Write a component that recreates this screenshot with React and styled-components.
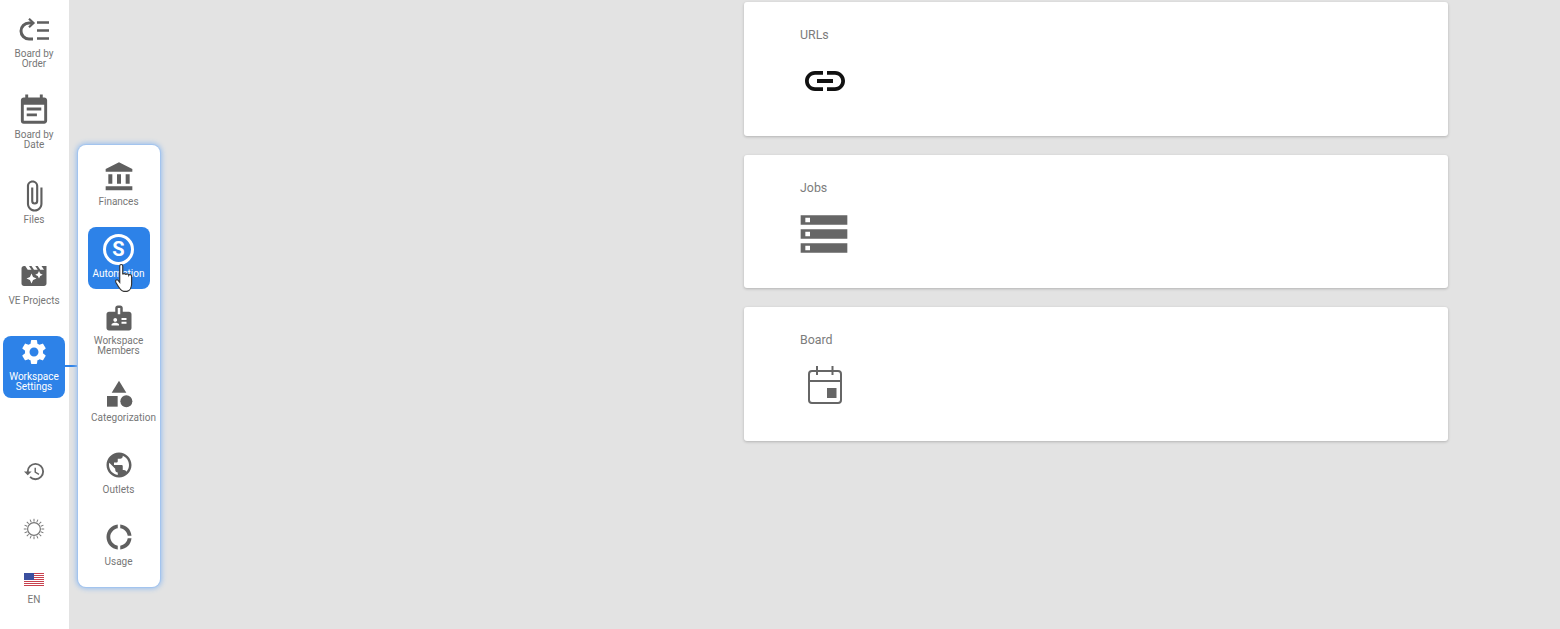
import React from 'react'
import styled, { createGlobalStyle } from 'styled-components'
import {
  MdAccountBalance,
  MdAttachFile,
  MdBadge,
  MdCategory,
  MdDonutLarge,
  MdEventNote,
  MdHistory,
  MdLink,
  MdMovieFilter,
  MdPublic,
  MdSettings,
  MdStorage,
} from 'react-icons/md'

const GlobalStyle = createGlobalStyle`
  html, body { margin: 0; height: 100%; background: #e3e3e3; }
  body { font-family: Roboto, "Liberation Sans", sans-serif; overflow: hidden; }
  #root { height: 100%; }
`

const Page = styled.div`
  display: flex;
  height: 629px;
  background: #e3e3e3;
  position: relative;
`

const Sidebar = styled.nav`
  width: 69px;
  flex: none;
  background: #fff;
  display: flex;
  flex-direction: column;
  padding: 12px 4px 0 3px;
  box-sizing: border-box;
`

const NavList = styled.div`
  display: flex;
  flex-direction: column;
  gap: 19px;
`

const NavItem = styled.div`
  width: 62px;
  height: 62px;
  box-sizing: border-box;
  padding-bottom: ${(p) => p.$pb || 0}px;
  border-radius: 8px;
  display: flex;
  flex-direction: column;
  align-items: center;
  justify-content: center;
  color: ${(p) => (p.$active ? '#fff' : '#5f5f5f')};
  background: ${(p) => (p.$active ? '#2d82e8' : 'transparent')};
  position: relative;
`

const FlyoutItem = styled(NavItem)`
  padding-right: 1px;
`

const Label = styled.span`
  display: block;
  width: 100%;
  padding: 0 3px;
  box-sizing: border-box;
  margin-top: ${(p) => p.$gap || 0}px;
  font-size: 10px;
  line-height: 10px;
  text-align: center;
  white-space: pre-line;
  color: ${(p) => (p.$active ? '#fff' : '#777')};
`

const Connector = styled.span`
  position: absolute;
  left: 62px;
  top: 29px;
  width: 13px;
  height: 2px;
  background: #2d82e8;
`

const BottomList = styled.div`
  display: flex;
  flex-direction: column;
  align-items: center;
  margin-top: 62px;
  color: #666;
`

const LangBlock = styled.div`
  display: flex;
  flex-direction: column;
  align-items: center;
  margin-top: 33px;
`

const SunWrap = styled.div`
  margin-top: 35px;
  height: 22px;
`

const Flyout = styled.div`
  position: absolute;
  left: 78px;
  top: 145px;
  width: 82px;
  height: 442px;
  box-sizing: border-box;
  background: #fff;
  border-radius: 8px;
  box-shadow: 0 0 0 1px #a3c4ee, 0 0 5px 2px #9cc0ee;
  padding: 10px 0 0 10px;
  display: flex;
  flex-direction: column;
  gap: 10px;
`

const Cursor = styled.svg`
  position: absolute;
  left: 24px;
  top: 36px;
`

const Main = styled.main`
  flex: 1;
  padding: 2px 0 0 675px;
`

const Cards = styled.div`
  width: 704px;
  display: flex;
  flex-direction: column;
  gap: 19px;
`

const Card = styled.section`
  height: 133.5px;
  box-sizing: border-box;
  background: #fff;
  border-radius: 3px;
  box-shadow: 0 1px 3px rgba(0, 0, 0, 0.22);
  padding: 26px 56px 0;
`

const CardTitle = styled.div`
  font-size: 12.4px;
  line-height: 14px;
  color: #7c7c7c;
`

const CardIcon = styled.div`
  margin-top: ${(p) => p.$top}px;
  margin-left: ${(p) => p.$left || 0}px;
  color: ${(p) => p.$color || '#666'};
  display: flex;
`

const SCircle = styled.div`
  width: 31px;
  height: 31px;
  box-sizing: border-box;
  border: 3.5px solid #fff;
  border-radius: 50%;
  display: flex;
  align-items: center;
  justify-content: center;
  font-size: 20px;
  font-weight: 700;
  color: #fff;
`

const OrderIcon = () => (
  <svg width="30" height="24" viewBox="0 0 30 24" fill="none" stroke="currentColor" strokeWidth="3">
    <path d="M13 5H10A8 8 0 0 0 10 21H14" />
    <path d="M10 0.8L14.5 5L10 9.2" strokeWidth="2.2" />
    <path d="M18 4.5H30M18 12.5H30M18 20.5H30" strokeWidth="2.4" />
  </svg>
)

const SunIcon = () => (
  <svg width="22" height="22" viewBox="0 0 22 22" fill="none" stroke="#777" strokeWidth="1">
    <circle cx="11" cy="11" r="6.4" strokeWidth="1.2" />
    {Array.from({ length: 16 }).map((_, i) => (
      <line key={i} x1="11" y1="0.8" x2="11" y2="3.6" transform={`rotate(${i * 22.5} 11 11)`} />
    ))}
  </svg>
)

const FlagIcon = () => (
  <svg width="20" height="13" viewBox="0 0 20 13">
    <rect width="20" height="13" fill="#fff" />
    {[0, 2, 4, 6, 8, 10, 12].map((y) => (
      <rect key={y} y={y} width="20" height="1" fill="#c8414e" />
    ))}
    <rect width="10" height="7" fill="#3b4f9f" />
  </svg>
)

const CalendarIcon = () => (
  <svg width="34" height="38" viewBox="0 0 34 38" fill="none" stroke="#666" strokeWidth="2">
    <rect x="1" y="5" width="32" height="32" rx="3" />
    <path d="M1 15H33" />
    <path d="M9 0V9M24.5 0V9" />
    <rect x="19" y="22" width="9.5" height="10" fill="#666" stroke="none" />
  </svg>
)

const HandCursor = () => (
  <Cursor width="27" height="30" viewBox="0 0 22 26">
    <path
      d="M6 2.5c0-1.6 2.6-1.6 2.6 0V10c0-1 2.4-1.2 2.6.2 .2-1 2.4-1 2.6.4 .4-.9 2.4-.7 2.5.8V18c0 3-1.6 6-4 6.6H9.5C7 24.4 5 21 2.6 16.6c-.8-1.6 1-2.8 2.1-1.5L6 16.8Z"
      fill="#fff"
      stroke="#333"
      strokeWidth="1"
    />
  </Cursor>
)

const flyoutItems = [
  { label: 'Finances', icon: <MdAccountBalance size={32} />, gap: 4, pb: 4 },
  { label: 'Automation', active: true, gap: 4.5, pb: 3 },
  { label: 'Workspace\nMembers', icon: <MdBadge size={30} />, gap: 3, pb: 1 },
  { label: 'Categorization', icon: <MdCategory size={32} />, gap: 3, pb: 3 },
  { label: 'Outlets', icon: <MdPublic size={30} />, gap: 5, pb: 3 },
  { label: 'Usage', icon: <MdDonutLarge size={30} />, gap: 5, pb: 3 },
]

export default function App() {
  return (
    <Page>
      <GlobalStyle />
      <Sidebar>
        <NavList>
          <NavItem>
            <OrderIcon />
            <Label $gap={7}>{'Board by\nOrder'}</Label>
          </NavItem>
          <NavItem $pb={5}>
            <MdEventNote size={36} />
            <Label $gap={2}>{'Board by\nDate'}</Label>
          </NavItem>
          <NavItem $pb={6}>
            <MdAttachFile size={34} />
            <Label $gap={2}>Files</Label>
          </NavItem>
          <NavItem $pb={5}>
            <MdMovieFilter size={30} />
            <Label $gap={5}>VE Projects</Label>
          </NavItem>
          <NavItem $active $pb={5}>
            <MdSettings size={30} />
            <Label $active $gap={5}>{'Workspace\nSettings'}</Label>
            <Connector />
          </NavItem>
        </NavList>
        <BottomList>
          <MdHistory size={23} />
          <SunWrap>
            <SunIcon />
          </SunWrap>
          <LangBlock>
            <FlagIcon />
            <Label $gap={9}>EN</Label>
          </LangBlock>
        </BottomList>
      </Sidebar>

      <Flyout>
        {flyoutItems.map((item) => (
          <FlyoutItem key={item.label} $active={item.active} $pb={item.pb}>
            {item.active ? <SCircle>S</SCircle> : item.icon}
            <Label $active={item.active} $gap={item.gap}>{item.label}</Label>
            {item.active && <HandCursor />}
          </FlyoutItem>
        ))}
      </Flyout>

      <Main>
        <Cards>
          <Card>
            <CardTitle>URLs</CardTitle>
            <CardIcon $top={15} $left={1} $color="#111">
              <MdLink size={48} />
            </CardIcon>
          </Card>
          <Card>
            <CardTitle>Jobs</CardTitle>
            <CardIcon $top={11} $left={-4}>
              <MdStorage size={56} />
            </CardIcon>
          </Card>
          <Card>
            <CardTitle>Board</CardTitle>
            <CardIcon $top={19} $left={8}>
              <CalendarIcon />
            </CardIcon>
          </Card>
        </Cards>
      </Main>
    </Page>
  )
}
